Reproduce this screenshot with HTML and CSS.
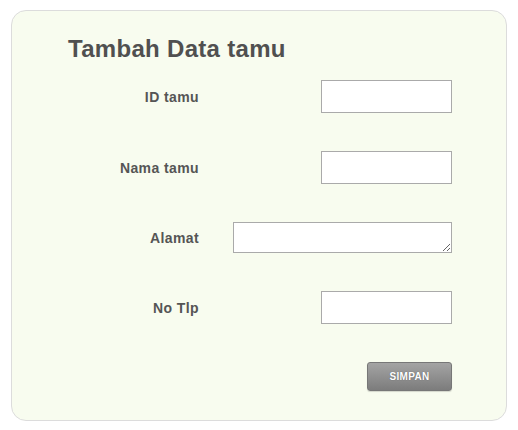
FILE: index.html
```html
<!DOCTYPE html>
<html>
<head>
<meta charset="utf-8">
<link rel="stylesheet" href="styles.css">
</head>
<body>
<div class="card">
  <h1 class="title">Tambah Data tamu</h1>
  <form class="form">
    <label class="label" for="id">ID tamu</label>
    <input class="field" id="id" type="text">
    <label class="label" for="nama">Nama tamu</label>
    <input class="field" id="nama" type="text">
    <label class="label" for="alamat">Alamat</label>
    <textarea class="area" id="alamat"></textarea>
    <label class="label" for="tlp">No Tlp</label>
    <input class="field" id="tlp" type="text">
    <span></span>
    <button class="btn" type="button">SIMPAN</button>
  </form>
</div>
</body>
</html>
```
FILE: styles.css
```css
html, body {
  margin: 0;
  padding: 0;
  background: #ffffff;
}
body {
  font-family: "Liberation Sans", Arial, sans-serif;
  color: #555555;
}
.card {
  margin: 10px 0 0 11px;
  width: 494px;
  height: 409px;
  border: 1px solid #dcdcdc;
  border-radius: 15px;
  background: #f8fcef;
  box-sizing: content-box;
}
.title {
  margin: 0;
  padding: 24px 0 0 56px;
  height: 45px;
  font-size: 24px;
  line-height: 28px;
  font-weight: bold;
  letter-spacing: 0.3px;
  color: #505050;
}
.form {
  display: grid;
  grid-template-columns: 187px 253px;
  grid-template-rows: 33px 33px 31px 33px 29px;
  row-gap: 38px;
  align-items: center;
  margin: 0;
}
.label {
  justify-self: end;
  font-size: 14px;
  font-weight: bold;
  letter-spacing: 0.4px;
  color: #555555;
}
.field {
  justify-self: end;
  width: 131px;
  height: 33px;
  box-sizing: border-box;
  border: 1px solid #aaaaaa;
  background: #ffffff;
  margin: 0;
  padding: 2px 4px;
  outline: none;
}
.area {
  justify-self: end;
  width: 219px;
  height: 31px;
  box-sizing: border-box;
  border: 1px solid #aaaaaa;
  background: #ffffff;
  margin: 0;
  padding: 2px;
  outline: none;
}
.btn {
  justify-self: end;
  width: 85px;
  height: 29px;
  margin: 0;
  border: 1px solid #777777;
  border-radius: 3px;
  background: linear-gradient(#a4a4a4, #7c7c7c);
  box-shadow: 0 1px 1px rgba(0,0,0,0.15);
  color: #ffffff;
  font-family: "Liberation Sans", Arial, sans-serif;
  font-size: 10px;
  font-weight: bold;
  letter-spacing: 0.3px;
  text-shadow: 0 0 1px rgba(0,0,0,0.4);
}
```
